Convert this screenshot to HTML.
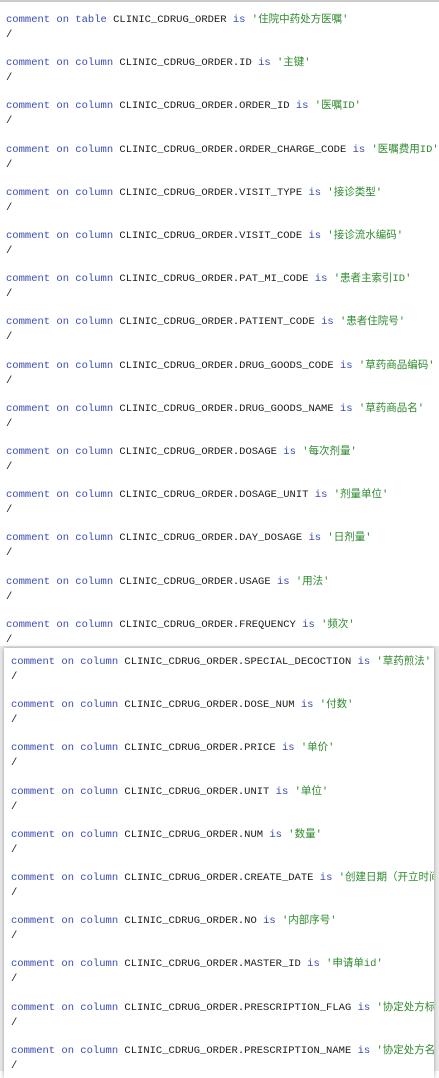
<!DOCTYPE html>
<html><head><meta charset="utf-8"><style>
html,body{margin:0;padding:0}
body{width:439px;height:1071px;position:relative;overflow:hidden;background:#fff;font-family:"Liberation Mono","Noto Sans CJK SC",monospace;font-size:10.5px;color:#1a1a1a}
.top{position:absolute;left:0;top:0;width:439px;height:2px;background:#ccc}
.l{position:absolute;white-space:pre;line-height:13px}
.k{color:#3a4bb5}
.s{color:#2f8a2f}
.p2{position:absolute;left:4px;top:648px;width:430px;height:430px;background:#fff;box-shadow:0 0 4px rgba(0,0,0,.35);overflow:hidden}
.bg{position:absolute;left:0;top:646px;width:439px;height:425px;background:#e9e9e9}
</style></head><body>
<div class="top"></div>
<div id="a"></div>
<div class="bg"></div>
<div class="p2" id="b"></div>
<script>
var A=[["table","","住院中药处方医嘱"],["column",".ID","主键"],["column",".ORDER_ID","医嘱ID"],["column",".ORDER_CHARGE_CODE","医嘱费用ID"],["column",".VISIT_TYPE","接诊类型"],["column",".VISIT_CODE","接诊流水编码"],["column",".PAT_MI_CODE","患者主索引ID"],["column",".PATIENT_CODE","患者住院号"],["column",".DRUG_GOODS_CODE","草药商品编码"],["column",".DRUG_GOODS_NAME","草药商品名"],["column",".DOSAGE","每次剂量"],["column",".DOSAGE_UNIT","剂量单位"],["column",".DAY_DOSAGE","日剂量"],["column",".USAGE","用法"],["column",".FREQUENCY","频次"]];
var B=[[".SPECIAL_DECOCTION","草药煎法"],[".DOSE_NUM","付数"],[".PRICE","单价"],[".UNIT","单位"],[".NUM","数量"],[".CREATE_DATE","创建日期（开立时间）"],[".NO","内部序号"],[".MASTER_ID","申请单id"],[".PRESCRIPTION_FLAG","协定处方标志"],[".PRESCRIPTION_NAME","协定处方名称"]];
function line(k,c,s){return '<span class="k">comment on '+k+'</span> CLINIC_CDRUG_ORDER'+c+' <span class="k">is</span> <span class="s">\''+s+'\'</span>';}
var h='';A.forEach(function(r,i){var y=14+i*43.2;h+='<div class="l" style="left:6px;top:'+y+'px">'+line(r[0],r[1],r[2])+'</div><div class="l" style="left:6px;top:'+(y+15)+'px">/</div>';});
document.getElementById('a').innerHTML=h;
h='';B.forEach(function(r,i){var y=8+i*43.2;h+='<div class="l" style="left:7px;top:'+y+'px">'+line('column',r[0],r[1])+'</div><div class="l" style="left:7px;top:'+(y+15)+'px">/</div>';});
document.getElementById('b').innerHTML=h;
</script>
</body></html>
